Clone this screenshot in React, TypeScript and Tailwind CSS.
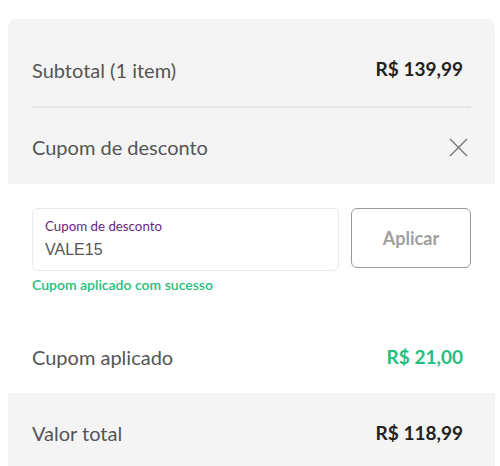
import React, { useState } from 'react';

const App: React.FC = () => {
  const [coupon, setCoupon] = useState('VALE15');

  return (
    <div className="min-h-screen bg-white pt-[19px] pl-2 pr-[5px]" style={{ fontFamily: 'Lato, "Open Sans", sans-serif' }}>
      <div className="rounded-t-lg bg-[#f4f4f4] overflow-hidden">
        {/* Subtotal */}
        <div className="mx-6 flex items-center justify-between h-[89px] pt-[14px] border-b-2 border-[#e6e6e6]">
          <span className="text-[20px] text-[#555555]">Subtotal (1 item)</span>
          <span className="pr-2 text-[19px] text-[#222222] font-bold">R$ 139,99</span>
        </div>

        {/* Coupon header */}
        <div className="mx-6 flex items-center justify-between h-[76px] pt-[2px]">
          <span className="text-[20px] text-[#555555]">Cupom de desconto</span>
          <button className="w-5 h-5 mr-[3px] flex items-center justify-center text-[#777777]">
            <svg width="19" height="19" viewBox="0 0 19 19" fill="none" stroke="currentColor" strokeWidth="1.4">
              <path d="M1 1L18 18M18 1L1 18" />
            </svg>
          </button>
        </div>

        {/* Coupon form */}
        <div className="bg-white px-6 pt-6">
          <div className="flex gap-3">
            <div className="flex-1 h-[63px] rounded-md border border-[#e8e8e8] px-3 pt-[9px]">
              <div className="text-[13.3px] leading-4 text-[#6b2480]">Cupom de desconto</div>
              <input
                value={coupon}
                onChange={(e) => setCoupon(e.target.value)}
                className="w-full text-[16px] text-[#555555] outline-none mt-1"
                style={{ fontFamily: '"Liberation Sans", Arial, sans-serif' }}
              />
            </div>
            <button className="w-[120px] h-[60px] rounded-md border border-[#999999] text-[18px] font-bold text-[#a0a0a0] bg-white">
              Aplicar
            </button>
          </div>
          <div className="mt-[5px] text-[14px] leading-[18px] text-[#1fbf7e] font-semibold">Cupom aplicado com sucesso</div>

          <div className="flex items-center justify-between h-[99px] pt-[27px]">
            <span className="text-[20px] text-[#555555]">Cupom aplicado</span>
            <span className="pr-2 text-[19px] text-[#1fbf7e] font-bold">R$ 21,00</span>
          </div>
        </div>

        {/* Total */}
        <div className="mx-6 flex items-center justify-between h-[80px]">
          <span className="text-[20px] text-[#555555]">Valor total</span>
          <span className="pr-2 text-[19px] text-[#222222] font-bold">R$ 118,99</span>
        </div>
      </div>
    </div>
  );
};

export default App;
